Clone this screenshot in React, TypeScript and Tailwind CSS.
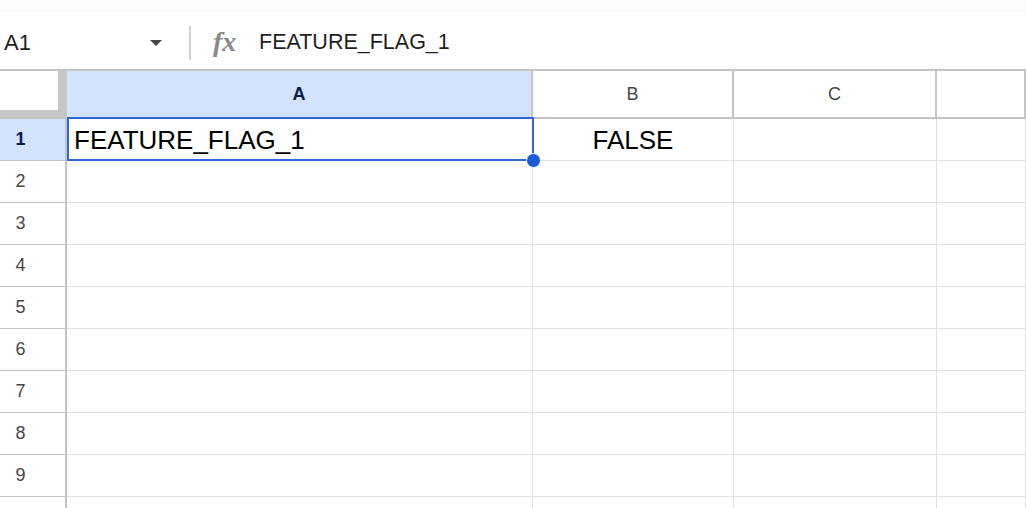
// Sheets-style grid: formula bar, column headers, row headers and cells
const COLS = [
  { key: "A", width: "w-[466px]" },
  { key: "B", width: "w-[201px]" },
  { key: "C", width: "w-[203px]" },
  { key: "D", width: "flex-1" },
];

const ROWS = [1, 2, 3, 4, 5, 6, 7, 8, 9, 10];

const cells: Record<string, string> = {
  A1: "FEATURE_FLAG_1",
  B1: "FALSE",
};

const FormulaBar = () => (
  <div className="h-[57px] pt-[4px] flex items-center bg-white">
    <div className="w-[189px] flex items-center pl-[4px] pr-[27px]">
      <span className="text-[22px] text-[#1f1f1f] flex-1">A1</span>
      <span className="w-0 h-0 border-l-[6px] border-r-[6px] border-t-[6px] border-l-transparent border-r-transparent border-t-[#444746]" />
    </div>
    <div className="w-[2px] h-[34px] bg-[#d0d0d0]" />
    <span className="ml-[22px] w-[46px] text-[28px] italic font-bold text-[#8a8a8a] leading-none font-['Liberation_Serif',serif] -mt-[2px]">
      fx
    </span>
    <span className="text-[21.5px] text-[#1f1f1f]">FEATURE_FLAG_1</span>
  </div>
);

const HeaderRow = () => (
  <div className="flex h-[48px] border-b-2 border-[#c4c4c4]">
    <div className="w-[67px] h-full bg-[#c7c7c7] shrink-0">
      <div className="w-[58px] h-[39px] bg-white" />
    </div>
    {COLS.map((c) => (
      <div
        key={c.key}
        className={`${c.width} shrink-0 h-full flex items-center justify-center border-r-2 border-[#c4c4c4] text-[18px] ${
          c.key === "A" ? "bg-[#d3e3fd] font-bold text-[#0b1d48]" : "bg-white text-[#444746]"
        }`}
      >
        {c.key === "D" ? "" : c.key}
      </div>
    ))}
  </div>
);

const Row = ({ n }: { n: number }) => (
  <div className="flex h-[42px]">
    <div
      className={`w-[67px] shrink-0 h-full flex items-center border-r-2 border-b border-r-[#c4c4c4] border-b-[#c4c4c4] text-[18px] ${
        n === 1 ? "bg-[#d3e3fd] font-bold text-[#0b1d48]" : "bg-white text-[#444746]"
      }`}
    >
      {/* row 10 sits below the fold, its number is not visible */}
      <span className="w-[41px] text-center">{n < 10 ? n : ""}</span>
    </div>
    {COLS.map((c) => {
      const value = cells[`${c.key}${n}`];
      return (
        <div
          key={c.key}
          className={`${c.width} shrink-0 h-full flex items-center pt-[2px] border-r border-b border-[#e1e1e1] text-[26px] text-black ${
            value === "FALSE" ? "justify-center" : "pl-[7px]"
          }`}
        >
          {value}
        </div>
      );
    })}
  </div>
);

export default function App() {
  return (
    <div className="w-[1026px] h-[508px] overflow-hidden bg-white font-['Liberation_Sans',Arial,sans-serif]">
      <div className="h-[12px] bg-[#f9fbfd]" />
      <div className="border-b-2 border-[#c4c4c4]">
        <FormulaBar />
      </div>
      <HeaderRow />
      <div className="relative">
        {ROWS.map((n) => (
          <Row key={n} n={n} />
        ))}
        {/* selection A1 */}
        <div className="absolute left-[67px] top-[-2px] w-[467px] h-[44px] border-2 border-[#2f67d8] pointer-events-none" />
        <div className="absolute left-[526px] top-[34px] w-[15px] h-[15px] rounded-full bg-[#1f5ad6] border-[1.5px] border-white" />
      </div>
    </div>
  );
}
